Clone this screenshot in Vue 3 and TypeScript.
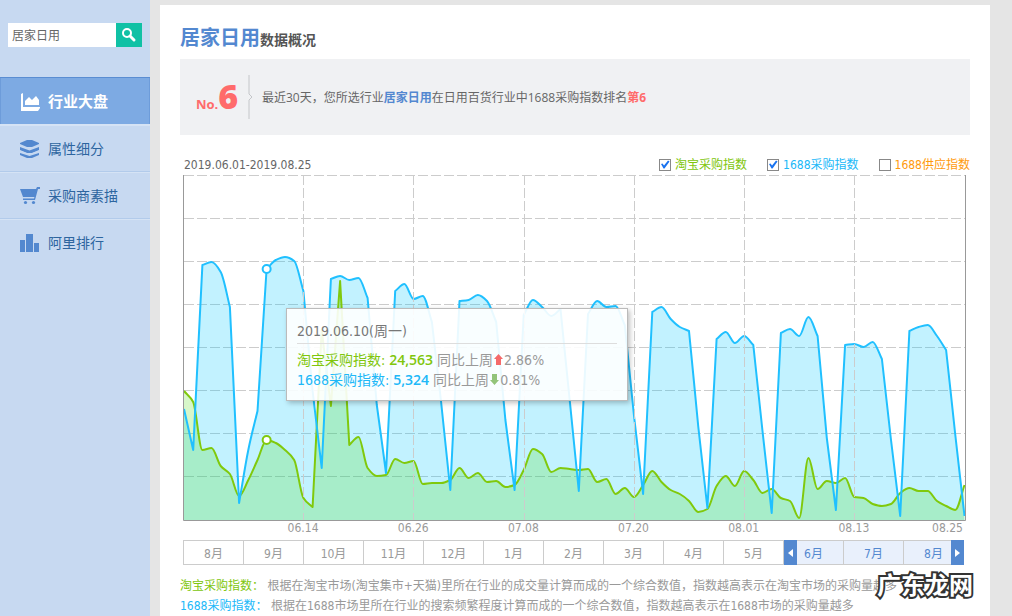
<script setup lang="ts">
import { computed, ref } from 'vue'

interface Series {
  key: string
  label: string
  on: boolean
}

const keyword = ref('居家日用')

const series = ref<Series[]>([
  { key: 'taobao', label: '淘宝采购指数', on: true },
  { key: 'buy', label: '1688采购指数', on: true },
  { key: 'supply', label: '1688供应指数', on: false },
])

// Daily index values, 2019.06.01 to 2019.08.25, as heights above the axis.
const buyValues: number[] = [
  111, 70, 255, 258, 248, 213, 17, 70, 109, 251, 260, 263, 259, 229, 129, 52, 241, 244, 240, 242,
  222, 115, 47, 229, 236, 221, 224, 198, 118, 30, 219, 220, 225, 219, 198, 100, 30, 205, 220, 213,
  204, 211, 120, 29, 206, 219, 213, 214, 195, 105, 26, 208, 213, 201, 193, 189, 94, 12, 181, 188,
  177, 184, 175, 89, 7, 187, 191, 184, 203, 184, 82, 10, 175, 176, 173, 178, 161, 80, 4, 189,
  193, 195, 184, 170, 85, 4,
]
const taobaoValues: number[] = [
  129, 118, 70, 72, 54, 46, 24, 40, 60, 80, 77, 70, 60, 22, 13, 190, 114, 239, 75, 83,
  52, 44, 45, 61, 57, 59, 36, 37, 37, 40, 52, 42, 47, 38, 39, 33, 35, 50, 71, 66,
  48, 52, 51, 50, 51, 38, 41, 26, 32, 23, 35, 49, 38, 30, 26, 19, 8, 11, 34, 44,
  34, 49, 40, 27, 31, 22, 19, 2, 62, 31, 39, 37, 42, 23, 22, 16, 14, 16, 27, 32,
  29, 29, 19, 14, 10, 35,
]

const baseline = 345
const step = 780.5 / 85
const steep = 75
const selectedDay = 9

const px = (i: number): number => 1 + i * step
const py = (v: number): number => baseline - v

// Gentle stretches are smoothed; next to a steep rise or fall the line stays straight.
function linePath(values: number[]): string {
  const diff = values.slice(1).map((v, i) => v - values[i])
  const tangent = (i: number, segment: number): number => {
    const before = diff[i - 1]
    const after = diff[i]
    if (before === undefined || after === undefined) return diff[segment]
    if (Math.abs(before) > steep || Math.abs(after) > steep) return diff[segment]
    if (before * after <= 0) return 0
    return (2 * before * after) / (before + after)
  }
  let d = `M${px(0)} ${py(values[0])}`
  for (let i = 0; i < diff.length; i++) {
    const c1 = py(values[i] + tangent(i, i) / 3)
    const c2 = py(values[i + 1] - tangent(i + 1, i) / 3)
    d += `C${(px(i) + step / 3).toFixed(1)} ${c1.toFixed(1)} ${(px(i + 1) - step / 3).toFixed(1)} ${c2.toFixed(1)} ${px(i + 1).toFixed(1)} ${py(values[i + 1])}`
  }
  return d
}

const areaPath = (line: string): string => `${line}L${px(85)} ${baseline}L${px(0)} ${baseline}Z`

const buyLine = computed(() => linePath(buyValues))
const taobaoLine = computed(() => linePath(taobaoValues))

const rows = [0, 43, 86, 129, 172, 215, 258, 301]
const columns = [120, 230, 341, 451, 561, 671]
const ticks = ['06.14', '06.26', '07.08', '07.20', '08.01', '08.13', '08.25']
const months = ['8月', '9月', '10月', '11月', '12月', '1月', '2月', '3月', '4月', '5月', '6月', '7月', '8月']
</script>

<template>
  <div class="page">
    <aside class="sidebar">
      <form class="search" @submit.prevent>
        <input v-model="keyword" class="search-box" type="text" aria-label="行业关键词" />
        <button class="search-button" type="submit" aria-label="搜索">
          <svg width="16" height="16" viewBox="0 0 16 16">
            <circle cx="6" cy="6" r="4" fill="none" stroke="#fff" stroke-width="2" />
            <path d="M9 9L13 13" stroke="#fff" stroke-width="3" stroke-linecap="round" />
          </svg>
        </button>
      </form>
      <nav class="menu">
        <a class="item active" href="#overview">
          <svg class="icon" width="20" height="20" viewBox="0 0 20 20" fill="#fff">
            <path d="M1 2L3 1V15H20V16L18 19H1Z" />
            <path d="M5 13V9L9 5L12 8L16 4L19 8V13Z" />
          </svg>
          行业大盘
        </a>
        <a class="item" href="#attributes">
          <svg class="icon" width="20" height="20" viewBox="0 0 20 20" fill="#5388cf">
            <path d="M0 4L7 1H12L19 4V5L12 8H7L0 5Z" />
            <path d="M0 8L9.500 11.500L19 8V11L12 14H7L0 11Z" />
            <path d="M0 14L9.500 17L19 14V16L12 19H7L0 16Z" />
            <path d="M0 11.500L9.500 15L19 11.500V13L9.500 16L0 13Z" fill="#c7d9f1" />
          </svg>
          属性细分
        </a>
        <a class="item" href="#buyers">
          <svg class="icon" width="20" height="20" viewBox="0 0 20 20" fill="#5388cf">
            <path d="M0 3H16L17 1H20V3H18L15 14H3V12.500H14L14.500 11H3Z" />
            <circle cx="5.500" cy="16.500" r="1.600" />
            <circle cx="13.500" cy="16.500" r="1.600" />
          </svg>
          采购商素描
        </a>
        <a class="item" href="#ranking">
          <svg class="icon" width="20" height="20" viewBox="0 0 20 20" fill="#5388cf">
            <path d="M0 7H5V19H0ZM6 1H13V19H6ZM14 10H19V19H14Z" />
          </svg>
          阿里排行
        </a>
      </nav>
    </aside>

    <main class="content">
      <h1 class="title"><span class="title-key">居家日用</span>数据概况</h1>

      <section class="rank">
        <p class="rank-no">No.<strong>6</strong></p>
        <svg class="divider" width="6" height="44" viewBox="0 0 6 44" fill="none">
          <path d="M1 0V19L4 22L1 25V44" stroke="#c4c6c9" />
        </svg>
        <p class="rank-text">最近30天，您所选行业<b class="key">居家日用</b>在日用百货行业中1688采购指数排名<b class="place">第6</b></p>
      </section>

      <section class="legend">
        <span class="range">2019.06.01-2019.08.25</span>
        <label v-for="s in series" :key="s.key" class="toggle" :class="s.key">
          <input v-model="s.on" type="checkbox" />{{ s.label }}
        </label>
      </section>

      <section class="chart">
        <svg class="plot" viewBox="0 0 783 346" preserveAspectRatio="none">
          <path v-for="y in rows" :key="'r' + y" class="grid" :d="`M1 ${y + 0.5}H782`" />
          <path v-if="series[1].on" :d="areaPath(buyLine)" fill="#00c8ff" fill-opacity="0.24" />
          <path v-if="series[0].on" :d="areaPath(taobaoLine)" fill="#4adc0a" fill-opacity="0.22" />
          <path v-if="series[0].on" class="line" :d="taobaoLine" stroke="#80c90c" />
          <path v-if="series[1].on" class="line" :d="buyLine" stroke="#20c0ff" />
          <path v-for="x in columns" :key="'c' + x" class="grid" :d="`M${x + 0.5} 0V345`" />
          <path d="M0.500 0V345.500H782.500V0" fill="none" stroke="#999" />
          <circle :cx="px(selectedDay)" :cy="py(buyValues[selectedDay])" r="4" fill="#fff" stroke="#20c0ff" stroke-width="2" />
          <circle :cx="px(selectedDay)" :cy="py(taobaoValues[selectedDay])" r="4" fill="#fff" stroke="#80c90c" stroke-width="2" />
        </svg>
        <div class="tip">
          <p class="tip-date">2019.06.10(周一)</p>
          <p class="tip-row">
            <span class="taobao">淘宝采购指数: <b>24,563</b></span> 同比上周<svg class="trend" width="9" height="12" viewBox="0 0 9 12"><path d="M4.500 0L9 5H7V11H2V5H0Z" fill="#f56a6a" /></svg>2.86%
          </p>
          <p class="tip-row">
            <span class="buy">1688采购指数: <b>5,324</b></span> 同比上周<svg class="trend" width="9" height="12" viewBox="0 0 9 12"><path d="M4.500 11L9 6H7V0H2V6H0Z" fill="#93c47a" /></svg>0.81%
          </p>
        </div>
      </section>
      <div class="ticks">
        <span v-for="t in ticks" :key="t">{{ t }}</span>
      </div>

      <div class="months">
        <span v-for="(m, i) in months" :key="i" class="month" :class="{ chosen: i > 9 }">{{ m }}</span>
        <div class="window">
          <button class="handle" type="button" aria-label="起始月份">
            <svg width="5" height="8" viewBox="0 0 5 8"><path d="M5 0V8L0 4Z" fill="#fff" /></svg>
          </button>
          <button class="handle" type="button" aria-label="结束月份">
            <svg width="5" height="8" viewBox="0 0 5 8"><path d="M0 0V8L5 4Z" fill="#fff" /></svg>
          </button>
        </div>
      </div>

      <div class="notes">
        <p><span class="taobao">淘宝采购指数：</span> 根据在淘宝市场(淘宝集市+天猫)里所在行业的成交量计算而成的一个综合数值，指数越高表示在淘宝市场的采购量越多</p>
        <p><span class="buy">1688采购指数：</span> 根据在1688市场里所在行业的搜索频繁程度计算而成的一个综合数值，指数越高表示在1688市场的采购量越多</p>
        <span class="mark">广东龙网</span>
      </div>
    </main>
  </div>
</template>

<style>
body {
  margin: 0;
  background: #e5e5e5;
}
</style>

<style scoped>
.page {
  display: flex;
  min-height: 100vh;
  font: 12px/20px "DejaVu Sans Condensed", "Noto Sans", "Noto Sans CJK SC", sans-serif;
  color: #666;
}
p,
h1 {
  margin: 0;
}
.sidebar {
  flex: none;
  width: 150px;
  background: #c7d9f1;
}
.search {
  display: flex;
  margin: 23px 8px 30px;
  height: 24px;
}
.search-box {
  flex: 1;
  min-width: 0;
  box-sizing: border-box;
  padding: 2px 4px 0;
  border: 0;
  background: #fff;
  color: #666;
  font: inherit;
}
.search-button {
  display: flex;
  align-items: center;
  justify-content: center;
  width: 26px;
  padding: 0;
  border: 0;
  background: #10c1a5;
}
.item {
  display: flex;
  align-items: center;
  box-sizing: border-box;
  height: 47px;
  padding-left: 20px;
  border-top: 1px solid #d5e3f5;
  border-bottom: 1px solid #b2cbeb;
  color: #2d659f;
  font-size: 14px;
  text-decoration: none;
}
.item:last-child {
  border-bottom-color: transparent;
}
.item.active {
  height: 48px;
  padding-top: 2px;
  border-top-color: #5a8dd2;
  border-bottom-color: #d5e3f5;
  background: #7daae3;
  background-clip: padding-box;
  box-shadow: inset 1px 0 #6d9cda, inset -1px 0 #6d9cda;
  color: #fff;
  font-size: 15px;
  font-weight: bold;
}
.icon {
  margin-right: 8px;
}
.content {
  flex: 1;
  min-width: 0;
  margin: 5px 22px 0 10px;
  padding: 17px 20px 0;
  background: #fff;
}
.title {
  display: flex;
  align-items: baseline;
  height: 37px;
  color: #555;
  font-size: 14px;
  line-height: 32px;
}
.title-key {
  color: #5388d0;
  font-size: 20px;
}
.rank {
  display: flex;
  align-items: center;
  height: 76px;
  padding-left: 16px;
  background: #f0f1f3;
  font-family: "Open Sans", "Noto Sans CJK SC", sans-serif;
}
.rank-no {
  width: 52px;
  padding-top: 6px;
  color: #ff6b6b;
  font-size: 13px;
  font-weight: bold;
  line-height: 44px;
}
.rank-no strong {
  font-size: 34px;
}
.divider {
  margin-right: 8px;
}
.rank-text {
  padding-top: 2px;
}
.key {
  color: #5388d0;
}
.place {
  color: #ff6b6b;
}
.legend {
  display: flex;
  align-items: center;
  gap: 20px;
  height: 21px;
  margin-top: 19px;
}
.range {
  margin: 0 auto 0 4px;
}
.toggle {
  display: flex;
  align-items: center;
  gap: 4px;
}
.toggle input {
  appearance: none;
  box-sizing: border-box;
  width: 12px;
  height: 12px;
  margin: 0;
  border: 1px solid #888;
  background: #fff;
}
.toggle input:checked::before {
  content: "";
  display: block;
  height: 10px;
  background: #1a73f0;
  clip-path: polygon(10% 45%, 25% 40%, 40% 60%, 80% 10%, 95% 20%, 45% 90%, 35% 90%);
}
.taobao {
  color: #80c60c;
}
.buy {
  color: #20b8f8;
}
.supply {
  color: #ff9a0c;
}
.chart {
  position: relative;
  margin: 0 4px 0 3px;
}
.plot {
  display: block;
  width: 100%;
  height: 346px;
}
.grid {
  fill: none;
  stroke: #ccc;
  stroke-dasharray: 10 3;
}
.line {
  fill: none;
  stroke-width: 2;
  stroke-linejoin: round;
}
.tip {
  position: absolute;
  top: 133px;
  left: 103px;
  box-sizing: border-box;
  width: 342px;
  padding: 11px 10px 10px;
  border: 1px solid #bbb;
  background: rgba(255, 255, 255, 0.9);
  box-shadow: 2px 2px 5px rgba(0, 0, 0, 0.25);
  color: #999;
  font-size: 14px;
}
.tip-date {
  margin-bottom: 6px;
  padding-bottom: 1px;
  border-bottom: 1px solid #ddd;
  color: #777;
  line-height: 22px;
}
.tip-row b {
  font-family: "Open Sans", sans-serif;
  font-weight: 600;
}
.trend {
  margin: 0 1px;
  vertical-align: -1px;
}
.ticks {
  display: grid;
  grid-template-columns: repeat(6, 110fr) 54fr;
  margin: 0 7px 5px 3px;
  padding-left: 65px;
  color: #999;
  line-height: 14px;
  text-align: center;
}
.ticks span:last-child {
  text-align: right;
}
.months {
  position: relative;
  display: grid;
  grid-template-columns: repeat(13, 1fr);
  margin: 0 6px 0 3px;
  border: solid #ccc;
  border-width: 1px 1px 1px 0;
  color: #999;
  text-align: center;
}
.month {
  padding-top: 3px;
  border-left: 1px solid #ccc;
}
.chosen {
  background: #e9f0fc;
  color: #5388d0;
}
.window {
  position: absolute;
  top: -1px;
  right: -1px;
  bottom: -1px;
  left: 77%;
  display: flex;
  justify-content: space-between;
}
.handle {
  display: flex;
  align-items: center;
  justify-content: center;
  width: 13px;
  padding: 0;
  border: 0;
  background: #5388d0;
}
.notes {
  position: relative;
  margin-top: 11px;
  color: #999;
  white-space: nowrap;
}
.mark {
  position: absolute;
  top: -4px;
  right: -3px;
  color: #fff;
  font-size: 24px;
  font-weight: bold;
  line-height: 28px;
  paint-order: stroke fill;
  -webkit-text-stroke: 4px #333;
}
</style>
